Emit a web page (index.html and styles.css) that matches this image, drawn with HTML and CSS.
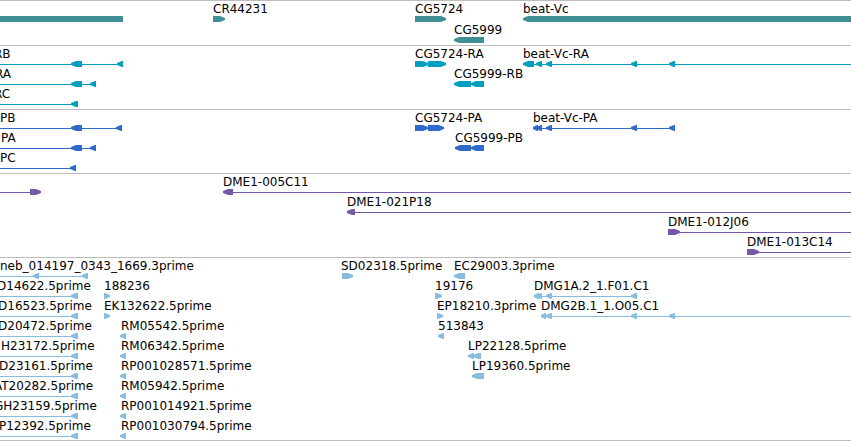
FILE: index.html
```
<!DOCTYPE html>
<html lang="en">

<head>
  <meta charset="UTF-8" />
  <meta name="viewport" content="width=device-width, initial-scale=1" />
  <title>Genome Browser</title>
  <link rel="stylesheet" href="styles.css">
</head>

<body>

  <main class="browser">
    <section class="track genes" id="genes" aria-label="Genes"></section>
    <section class="track transcripts" id="transcripts" aria-label="Transcripts"></section>
    <section class="track proteins" id="proteins" aria-label="Proteins"></section>
    <section class="track clones" id="clones" aria-label="Clones"></section>
    <section class="track ests" id="ests" aria-label="ESTs"></section>
  </main>

  <script src="tracks.js"></script>
</body>

</html>
```
FILE: styles.css
```
body {
  margin: 0;
  background: #fff;
  color: #000;
  font-family: 'DejaVu Sans', sans-serif;
  font-size: 12px;
  line-height: 14px;
}

.browser {
  overflow: hidden;
  border-bottom: 1px solid #bdbdbd;
}

.track {
  display: flex;
  flex-direction: column;
  border-top: 1px solid #bdbdbd;
  padding: 1px 0 2px;
}

.genes {
  gap: 1px;
  color: #3f8f94;
}

.transcripts {
  color: #009fbf;
}

.proteins {
  color: #306bcc;
}

.clones {
  color: #7457a7;
}

.ests {
  padding-bottom: 1px;
  color: #87bcdf;
}

.lane {
  position: relative;
  padding-top: 14px;
}

/* labels sit at their feature's place on the sequence */
.label {
  position: absolute;
  top: 0;
  color: #000;
  white-space: nowrap;
}

.glyphs {
  display: block;
  width: 100%;
  height: 6px;
  fill: currentColor;
}
```
FILE: tracks.js
```
// length of the visible region, in map units
const REGION = 851;
const HEAD = 5;

// feature: [label, label start, direction, blocks, line]
// direction: 1 = forward, -1 = reverse, 0 = no arrow head
const tracks = {
  genes: [
    [
      ['', 0, 0, [[-10, 123]]],
      ['CR44231', 213, 1, [[213, 225]]],
      ['CG5724', 415, 1, [[415, 446]]],
      ['beat-Vc', 523, -1, [[523, 861]]]
    ],
    [
      ['CG5999', 454, -1, [[454, 484]]]
    ]
  ],
  transcripts: [
    [
      ['RB', -6, -1, [[71, 82], [117, 123]], [-10, 123]],
      ['CG5724-RA', 415, 1, [[415, 428], [428, 446]], [415, 446]],
      ['beat-Vc-RA', 523, -1, [[523, 534], [536, 542], [546, 552], [631, 637], [669, 675]], [523, 861]]
    ],
    [
      ['RA', -5, -1, [[71, 82], [90, 96]], [-10, 96]],
      ['CG5999-RB', 454, -1, [[454, 471], [471, 484]], [454, 484]]
    ],
    [
      ['RC', -6, -1, [[71, 78]], [-10, 78]]
    ]
  ],
  proteins: [
    [
      ['PB', 0, -1, [[71, 82], [116, 122]], [-10, 122]],
      ['CG5724-PA', 415, 1, [[415, 428], [428, 444]], [415, 444]],
      ['beat-Vc-PA', 533, -1, [[533, 538], [536, 542], [546, 552], [631, 637], [669, 675]], [533, 675]]
    ],
    [
      ['PA', 1, -1, [[71, 82], [90, 96]], [-10, 96]],
      ['CG5999-PB', 455, -1, [[455, 471], [471, 484]], [455, 484]]
    ],
    [
      ['PC', 0, -1, [[70, 76]], [-10, 76]]
    ]
  ],
  clones: [
    [
      ['', 0, 1, [[30, 41]], [-10, 41]],
      ['DME1-005C11', 223, -1, [[223, 233]], [223, 861]]
    ],
    [
      ['DME1-021P18', 347, -1, [[347, 355]], [347, 861]]
    ],
    [
      ['DME1-012J06', 668, 1, [[668, 680]], [668, 861]]
    ],
    [
      ['DME1-013C14', 747, 1, [[747, 759]], [747, 861]]
    ]
  ],
  ests: [
    [
      ['neb_014197_0343_1669.3prime', 0, -1, [[33, 39], [82, 88]], [-10, 88]],
      ['SD02318.5prime', 341, 1, [[342, 353]]],
      ['EC29003.3prime', 454, -1, [[454, 465]]]
    ],
    [
      ['D14622.5prime', -3, -1, [[71, 78]], [-10, 78]],
      ['188236', 104, 1, [[104, 110]]],
      ['19176', 435, 1, [[435, 442]]],
      ['DMG1A.2_1.F01.C1', 534, -1, [[534, 539], [537, 542], [546, 552], [631, 637]], [534, 637]]
    ],
    [
      ['D16523.5prime', -2, -1, [[71, 78]], [-10, 78]],
      ['EK132622.5prime', 104, 1, [[104, 110]]],
      ['EP18210.3prime', 437, 1, [[437, 443]]],
      ['DMG2B.1_1.O05.C1', 541, -1, [[541, 546], [546, 552], [631, 637], [669, 675]], [541, 861]]
    ],
    [
      ['D20472.5prime', -2, -1, [[71, 78]], [-10, 78]],
      ['RM05542.5prime', 121, -1, [[120, 126]]],
      ['513843', 438, -1, [[438, 444]]]
    ],
    [
      ['H23172.5prime', 1, -1, [[71, 78]], [-10, 78]],
      ['RM06342.5prime', 121, -1, [[120, 126]]],
      ['LP22128.5prime', 468, -1, [[468, 474], [473, 481]]]
    ],
    [
      ['D23161.5prime', -1, -1, [[71, 78]], [-10, 78]],
      ['RP001028571.5prime', 121, -1, [[120, 126]]],
      ['LP19360.5prime', 472, -1, [[472, 484]]]
    ],
    [
      ['AT20282.5prime', -6, -1, [[71, 78]], [-10, 78]],
      ['RM05942.5prime', 121, -1, [[120, 126]]]
    ],
    [
      ['GH23159.5prime', -6, -1, [[71, 78]], [-10, 78]],
      ['RP001014921.5prime', 121, -1, [[120, 126]]]
    ],
    [
      ['P12392.5prime', -1, -1, [[71, 78]], [-10, 78]],
      ['RP001030794.5prime', 121, -1, [[120, 126]]]
    ]
  ]
};

// the head stops one unit short of the block's far end and has a blunt tip
function blockPath(start, end, dir) {
  const head = Math.min(HEAD, end - start - 1);
  if (dir === 1) {
    return `M${start} 0H${end - head}L${end} 2V4L${end - head} 6H${start}Z`;
  }
  if (dir === -1) {
    return `M${end} 0H${start + head}L${start} 2V4L${start + head} 6H${end}Z`;
  }
  return `M${start} 0H${end}V6H${start}Z`;
}

function renderLane(features, scale) {
  let labels = '';
  let shapes = '';

  features.forEach(([name, at, dir, blocks, line]) => {
    if (name) {
      labels += `<span class="label" style="left: ${Math.round(at * scale)}px">${name}</span>`;
    }
    if (line) {
      const x = Math.round(line[0] * scale);
      const width = Math.round(line[1] * scale) - x;
      shapes += `<rect x="${x}" y="3" width="${width}" height="1" />`;
    }
    blocks.forEach(([start, end]) => {
      shapes += `<path d="${blockPath(Math.round(start * scale), Math.round(end * scale), dir)}" />`;
    });
  });

  return `<div class="lane">${labels}<svg class="glyphs" aria-hidden="true">${shapes}</svg></div>`;
}

function render() {
  const scale = document.querySelector('.browser').clientWidth / REGION;

  Object.keys(tracks).forEach(id => {
    document.getElementById(id).innerHTML = tracks[id].map(lane => renderLane(lane, scale)).join('');
  });
}

window.addEventListener('resize', render);
render();
```
